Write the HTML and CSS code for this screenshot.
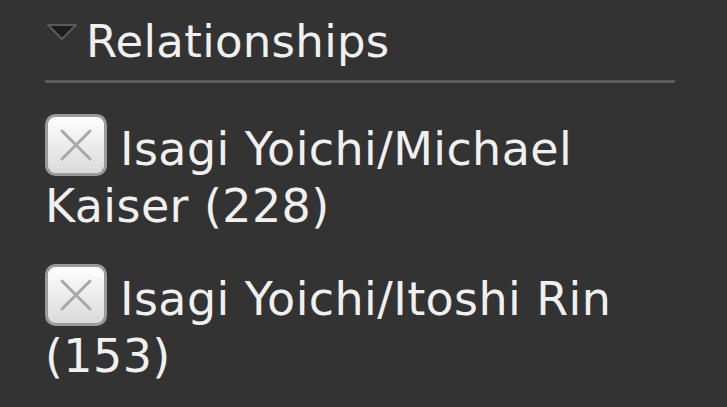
FILE: index.html
```html
<!DOCTYPE html>
<html lang="en">
<head>
  <meta charset="UTF-8" />
  <meta name="viewport" content="width=device-width, initial-scale=1.0" />
  <title>Relationships</title>
  <link rel="stylesheet" href="styles.css">
</head>
<body>
  <div class="filter-group">
    <h2 class="group-title">
      <svg class="caret" width="32" height="18" viewBox="0 0 32 18">
        <polygon points="2,2 30,2 16,16" fill="#1c1c1c" stroke="#5a5a5a" stroke-width="2" stroke-linejoin="round" />
      </svg>Relationships
    </h2>

    <ul class="tag-list">
      <li class="tag-item">
        <svg class="tag-check" width="62" height="62" viewBox="0 0 62 62">
          <defs>
            <linearGradient id="boxFill" x1="0" y1="0" x2="0" y2="1">
              <stop offset="0" stop-color="#ffffff" />
              <stop offset="1" stop-color="#d9d9d9" />
            </linearGradient>
          </defs>
          <rect x="1.5" y="1.5" width="59" height="59" rx="9" fill="url(#boxFill)" stroke="#9a9a9a" stroke-width="3" />
          <path d="M17 17 L45 45 M45 17 L17 45" stroke="#a8a8a8" stroke-width="3" stroke-linecap="round" />
        </svg>Isagi Yoichi/Michael Kaiser (228)
      </li>
      <li class="tag-item">
        <svg class="tag-check" width="62" height="62" viewBox="0 0 62 62">
          <rect x="1.5" y="1.5" width="59" height="59" rx="9" fill="url(#boxFill)" stroke="#9a9a9a" stroke-width="3" />
          <path d="M17 17 L45 45 M45 17 L17 45" stroke="#a8a8a8" stroke-width="3" stroke-linecap="round" />
        </svg>Isagi Yoichi/Itoshi Rin (153)
      </li>
    </ul>
  </div>
</body>
</html>
```

FILE: styles.css
```css
body {
  margin: 0;
  background-color: #333333;
  color: #f0f0f0;
  font-family: "DejaVu Sans", Verdana, sans-serif;
}

.filter-group {
  width: 630px;
  padding-left: 45px;
}

.group-title {
  margin: 0;
  padding: 13px 0 10px;
  font-size: 45px;
  font-weight: normal;
  line-height: 57px;
  letter-spacing: 0.3px;
  border-bottom: 3px solid #5c5c5c;
}

.caret {
  vertical-align: 16px;
  margin-left: 1px;
  margin-right: 8px;
}

.tag-list {
  list-style: none;
  margin: 31px 0 0;
  padding: 0;
}

.tag-item {
  font-size: 46px;
  line-height: 57px;
  letter-spacing: 0.4px;
  margin-bottom: 29px;
}

.tag-check {
  vertical-align: -11px;
  margin-right: 13px;
}
```
